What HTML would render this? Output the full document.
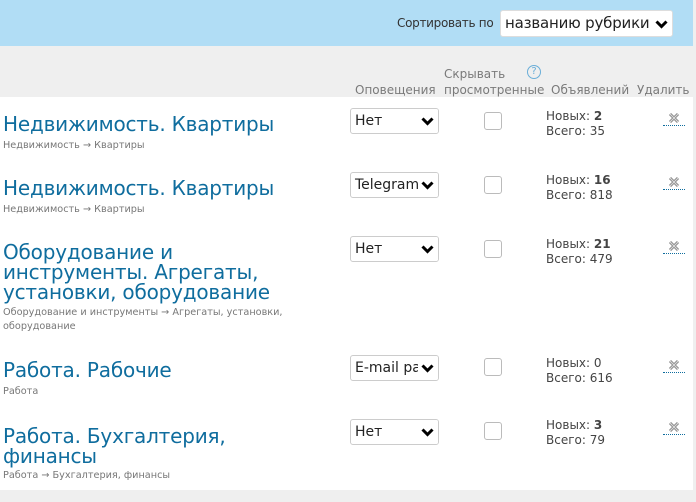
<!DOCTYPE html><html><head><meta charset="utf-8"><style>
body{margin:0;width:696px;height:502px;background:#efefef;position:relative;overflow:hidden;font-family:"DejaVu Sans","Liberation Sans",sans-serif}
.a{position:absolute;white-space:nowrap}
.top{left:0;top:0;width:693px;height:46px;background:#b1ddf5}
.main{left:0;top:97px;width:693px;height:393px;background:#fff}
.h{font-size:12px;color:#7a7a7a;line-height:16px}
.t{font-size:20px;color:#0f6d9e;line-height:20px;letter-spacing:-0.2px}
.s{font-size:9.7px;color:#777;line-height:14px}
.sel{width:89px;height:26px;border:1px solid #ccc;border-radius:3px;background:#fff;font-size:14px;color:#222;line-height:24px;padding-left:4px;box-sizing:border-box;overflow:hidden}
.sel i{position:absolute;right:0;top:0;width:20px;height:24px;background:#fff}
.sel svg{position:absolute;right:4px;top:8px}
.cb{width:18px;height:18px;border:1px solid #bbb;border-radius:3px;box-sizing:border-box;background:#fff}
.st{font-size:12px;color:#444;line-height:15px}
.x{width:22px;height:13px;border-bottom:1px dotted #0f6d9e}
.x svg{position:absolute;left:5px;top:0}
</style></head><body>
<div class="a top"></div>
<div class="a" style="left:397px;top:16px;font-size:12px;color:#333;letter-spacing:-0.3px">Сортировать по</div>
<div class="a sel" style="left:500px;top:10px;width:173px;height:27px;font-size:15px;line-height:25px;border-color:#ddd;letter-spacing:-0.2px"><span>названию рубрики</span><i></i><svg width="13" height="9" viewBox="0 0 13 9" style="top:9px"><path d="M1.5 1.5L6.5 6.5L11.5 1.5" fill="none" stroke="#000" stroke-width="3"/></svg></div>
<div class="a main"></div>
<div class="a h" style="left:355px;top:82px">Оповещения</div>
<div class="a h" style="left:444px;top:66px">Скрывать<br>просмотренные</div>
<div class="a" style="left:527px;top:65px;width:12px;height:12px;border:1px solid #6aaed8;border-radius:50%;font-size:10px;color:#6aaed8;text-align:center;line-height:12px">?</div>
<div class="a h" style="left:551px;top:82px">Объявлений</div>
<div class="a h" style="left:637px;top:82px">Удалить</div>

<div class="a t" style="left:3px;top:114px">Недвижимость. Квартиры</div>
<div class="a s" style="left:3px;top:139px">Недвижимость → Квартиры</div>
<div class="a sel" style="left:350px;top:108px">Нет<i></i><svg width="13" height="9" viewBox="0 0 13 9"><path d="M1.5 1.5L6.5 6.5L11.5 1.5" fill="none" stroke="#000" stroke-width="3"/></svg></div>
<div class="a cb" style="left:484px;top:112px"></div>
<div class="a st" style="left:546px;top:109px">Новых: <b>2</b><br>Всего: 35</div>
<div class="a x" style="left:663px;top:112px"><svg width="12" height="12" viewBox="0 0 12 12"><path d="M2 2L10 10M10 2L2 10" stroke="#888" stroke-width="3"/><path d="M2 2L10 10M10 2L2 10" stroke="#ddd" stroke-width="1"/></svg></div>

<div class="a t" style="left:3px;top:178px">Недвижимость. Квартиры</div>
<div class="a s" style="left:3px;top:203px">Недвижимость → Квартиры</div>
<div class="a sel" style="left:350px;top:172px">Telegram<i></i><svg width="13" height="9" viewBox="0 0 13 9"><path d="M1.5 1.5L6.5 6.5L11.5 1.5" fill="none" stroke="#000" stroke-width="3"/></svg></div>
<div class="a cb" style="left:484px;top:176px"></div>
<div class="a st" style="left:546px;top:173px">Новых: <b>16</b><br>Всего: 818</div>
<div class="a x" style="left:663px;top:176px"><svg width="12" height="12" viewBox="0 0 12 12"><path d="M2 2L10 10M10 2L2 10" stroke="#888" stroke-width="3"/><path d="M2 2L10 10M10 2L2 10" stroke="#ddd" stroke-width="1"/></svg></div>

<div class="a t" style="left:3px;top:242px">Оборудование и<br>инструменты. Агрегаты,<br>установки, оборудование</div>
<div class="a s" style="left:3px;top:306px">Оборудование и инструменты → Агрегаты, установки,<br>оборудование</div>
<div class="a sel" style="left:350px;top:236px">Нет<i></i><svg width="13" height="9" viewBox="0 0 13 9"><path d="M1.5 1.5L6.5 6.5L11.5 1.5" fill="none" stroke="#000" stroke-width="3"/></svg></div>
<div class="a cb" style="left:484px;top:240px"></div>
<div class="a st" style="left:546px;top:237px">Новых: <b>21</b><br>Всего: 479</div>
<div class="a x" style="left:663px;top:240px"><svg width="12" height="12" viewBox="0 0 12 12"><path d="M2 2L10 10M10 2L2 10" stroke="#888" stroke-width="3"/><path d="M2 2L10 10M10 2L2 10" stroke="#ddd" stroke-width="1"/></svg></div>

<div class="a t" style="left:3px;top:360px">Работа. Рабочие</div>
<div class="a s" style="left:3px;top:385px">Работа</div>
<div class="a sel" style="left:350px;top:355px">E-mail pa<i></i><svg width="13" height="9" viewBox="0 0 13 9"><path d="M1.5 1.5L6.5 6.5L11.5 1.5" fill="none" stroke="#000" stroke-width="3"/></svg></div>
<div class="a cb" style="left:484px;top:358px"></div>
<div class="a st" style="left:546px;top:356px">Новых: 0<br>Всего: 616</div>
<div class="a x" style="left:663px;top:359px"><svg width="12" height="12" viewBox="0 0 12 12"><path d="M2 2L10 10M10 2L2 10" stroke="#888" stroke-width="3"/><path d="M2 2L10 10M10 2L2 10" stroke="#ddd" stroke-width="1"/></svg></div>

<div class="a t" style="left:3px;top:426px">Работа. Бухгалтерия,<br>финансы</div>
<div class="a s" style="left:3px;top:469px">Работа → Бухгалтерия, финансы</div>
<div class="a sel" style="left:350px;top:419px">Нет<i></i><svg width="13" height="9" viewBox="0 0 13 9"><path d="M1.5 1.5L6.5 6.5L11.5 1.5" fill="none" stroke="#000" stroke-width="3"/></svg></div>
<div class="a cb" style="left:484px;top:422px"></div>
<div class="a st" style="left:546px;top:418px">Новых: <b>3</b><br>Всего: 79</div>
<div class="a x" style="left:663px;top:421px"><svg width="12" height="12" viewBox="0 0 12 12"><path d="M2 2L10 10M10 2L2 10" stroke="#888" stroke-width="3"/><path d="M2 2L10 10M10 2L2 10" stroke="#ddd" stroke-width="1"/></svg></div>
</body></html>
